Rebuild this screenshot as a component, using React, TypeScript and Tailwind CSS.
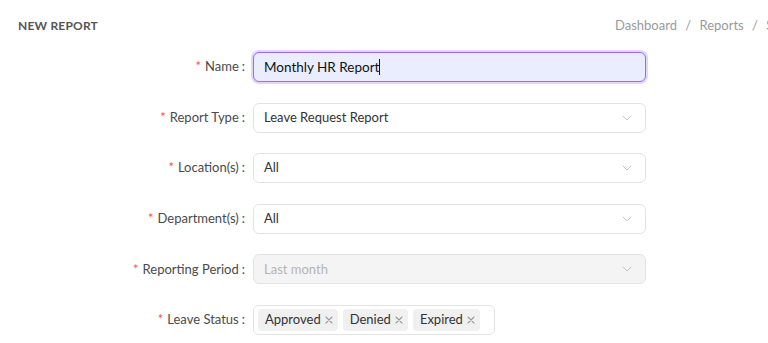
import { ChevronDown } from "lucide-react"

const font = { fontFamily: "Lato, 'Open Sans', sans-serif" }

function Label({ text }: { text: string }) {
  return (
    <div className="flex items-center justify-end text-[13px] text-[#4a4a4a] whitespace-nowrap pr-2">
      <span className="text-[#ff4d4f] mr-1">*</span>
      <span>{text}</span>
      <span className="ml-[3px]">:</span>
    </div>
  )
}

function Select({ value, disabled }: { value: string; disabled?: boolean }) {
  return (
    <div
      className={
        disabled
          ? "h-[30px] w-[393px] flex items-center justify-between px-[10px] rounded-md border border-[#e3e3e3] bg-[#f4f4f4] text-[13px] text-[#b5b5b5]"
          : "h-[30px] w-[393px] flex items-center justify-between px-[10px] rounded-md border border-[#e3e3e3] bg-white text-[13px] text-[#333]"
      }
    >
      <span>{value}</span>
      <ChevronDown className="h-4 w-4 text-[#bdbdbd]" strokeWidth={1.3} />
    </div>
  )
}

function Tag({ text }: { text: string }) {
  return (
    <div className="h-[22px] flex items-center gap-[4px] pl-[7px] pr-[5px] rounded bg-[#f0f0f0] text-[13px] text-[#333]">
      <span>{text}</span>
      <svg width="8" height="8" viewBox="0 0 8 8" className="text-[#9a9a9a]">
        <path d="M1 1L7 7M7 1L1 7" stroke="currentColor" strokeWidth="1.1" strokeLinecap="round" />
      </svg>
    </div>
  )
}

export default function App() {
  return (
    <div className="w-[768px] h-[343px] bg-white overflow-hidden" style={font}>
      <div className="flex items-center justify-between h-[52px] pl-[18px]">
        <h1 className="text-[12px] font-bold text-[#555] tracking-[0.2px]">NEW REPORT</h1>
        <div className="w-[153px] shrink-0 overflow-hidden whitespace-nowrap text-[13px] text-[#9a9a9a]">
          Dashboard <span className="mx-[5px]">/</span> Reports <span className="mx-[5px]">/</span> Summary
        </div>
      </div>

      <div className="grid grid-cols-[253px_1fr] gap-y-[20.6px] items-center">
        <Label text="Name" />
        <div className="h-[30px] w-[393px] flex items-center px-[10px] rounded-md border border-[#9b6bf2] bg-[#e9edfd] ring-2 ring-[#e2d6fc] text-[13.5px] text-[#111]">
          Monthly HR Report<span className="w-px h-[16px] bg-[#111]" />
        </div>

        <Label text="Report Type" />
        <Select value="Leave Request Report" />

        <Label text="Location(s)" />
        <Select value="All" />

        <Label text="Department(s)" />
        <Select value="All" />

        <Label text="Reporting Period" />
        <Select value="Last month" disabled />

        <Label text="Leave Status" />
        <div className="h-[30px] w-[242px] flex items-center gap-[5px] px-[4px] rounded-md border border-[#e3e3e3] bg-white">
          <Tag text="Approved" />
          <Tag text="Denied" />
          <Tag text="Expired" />
        </div>
      </div>
    </div>
  )
}
